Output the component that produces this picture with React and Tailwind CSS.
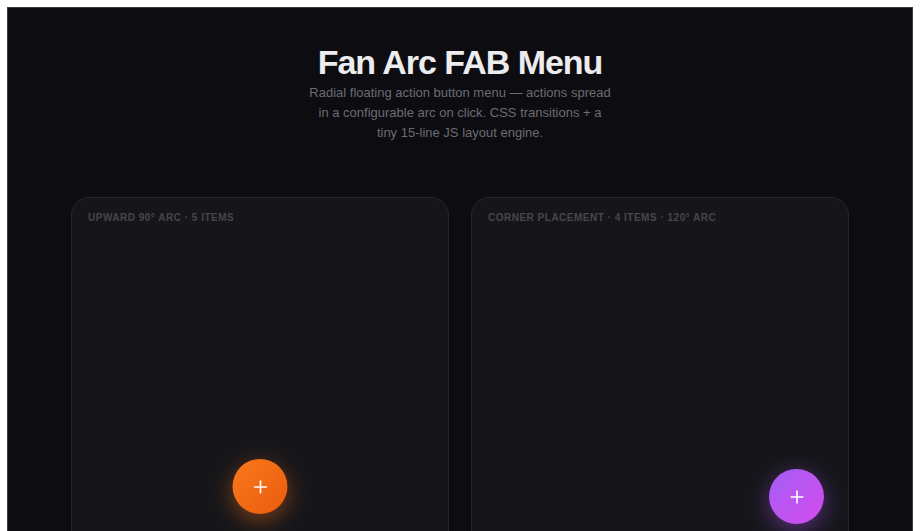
import { Plus } from "lucide-react";

function Fab({ className }) {
  return (
    <button
      className={
        "absolute flex h-[55px] w-[55px] items-center justify-center rounded-full text-white " +
        className
      }
    >
      <Plus size={20} strokeWidth={2} />
    </button>
  );
}

function Card({ label, children }) {
  return (
    <div className="relative h-[352px] overflow-hidden rounded-[18px] border border-[#25252a] bg-[#16161a] px-4 pt-[12px]">
      <div className="text-[10px] font-bold uppercase tracking-[0.05em] text-[#46464d]">
        {label}
      </div>
      {children}
    </div>
  );
}

export default function App() {
  return (
    <div
      className="min-h-screen bg-white p-[7px] pb-0"
      style={{ fontFamily: '"Liberation Sans", Arial, sans-serif' }}
    >
      <div className="h-[524px] overflow-hidden border border-b-0 border-[#3a3a3e] bg-[#0d0d11]">
        <div className="flex flex-col items-center pt-[36px]">
          <h1 className="text-[34px] leading-[37px] font-bold tracking-[-0.03em] text-[#ececef]">
            Fan Arc FAB Menu
          </h1>
          <p className="mt-[2px] max-w-[306px] text-center text-[13px] leading-[20px] text-[#6b6b73]">
            Radial floating action button menu — actions spread in a
            configurable arc on click. CSS transitions + a tiny 15-line JS
            layout engine.
          </p>
        </div>

        <div className="mt-[54px] flex justify-center gap-[22px]">
          <div className="w-[378px]">
            <Card label="Upward 90° arc · 5 items">
              <Fab className="bottom-[34px] left-1/2 -translate-x-1/2 bg-gradient-to-br from-[#f97a1c] to-[#ea5a0c] shadow-[0_6px_22px_rgba(249,115,22,0.45)]" />
            </Card>
          </div>
          <div className="w-[378px]">
            <Card label="Corner placement · 4 items · 120° arc">
              <Fab className="bottom-[24px] right-[24px] bg-gradient-to-br from-[#a35cf6] to-[#d44aec] shadow-[0_6px_22px_rgba(168,85,247,0.45)]" />
            </Card>
          </div>
        </div>
      </div>
    </div>
  );
}
